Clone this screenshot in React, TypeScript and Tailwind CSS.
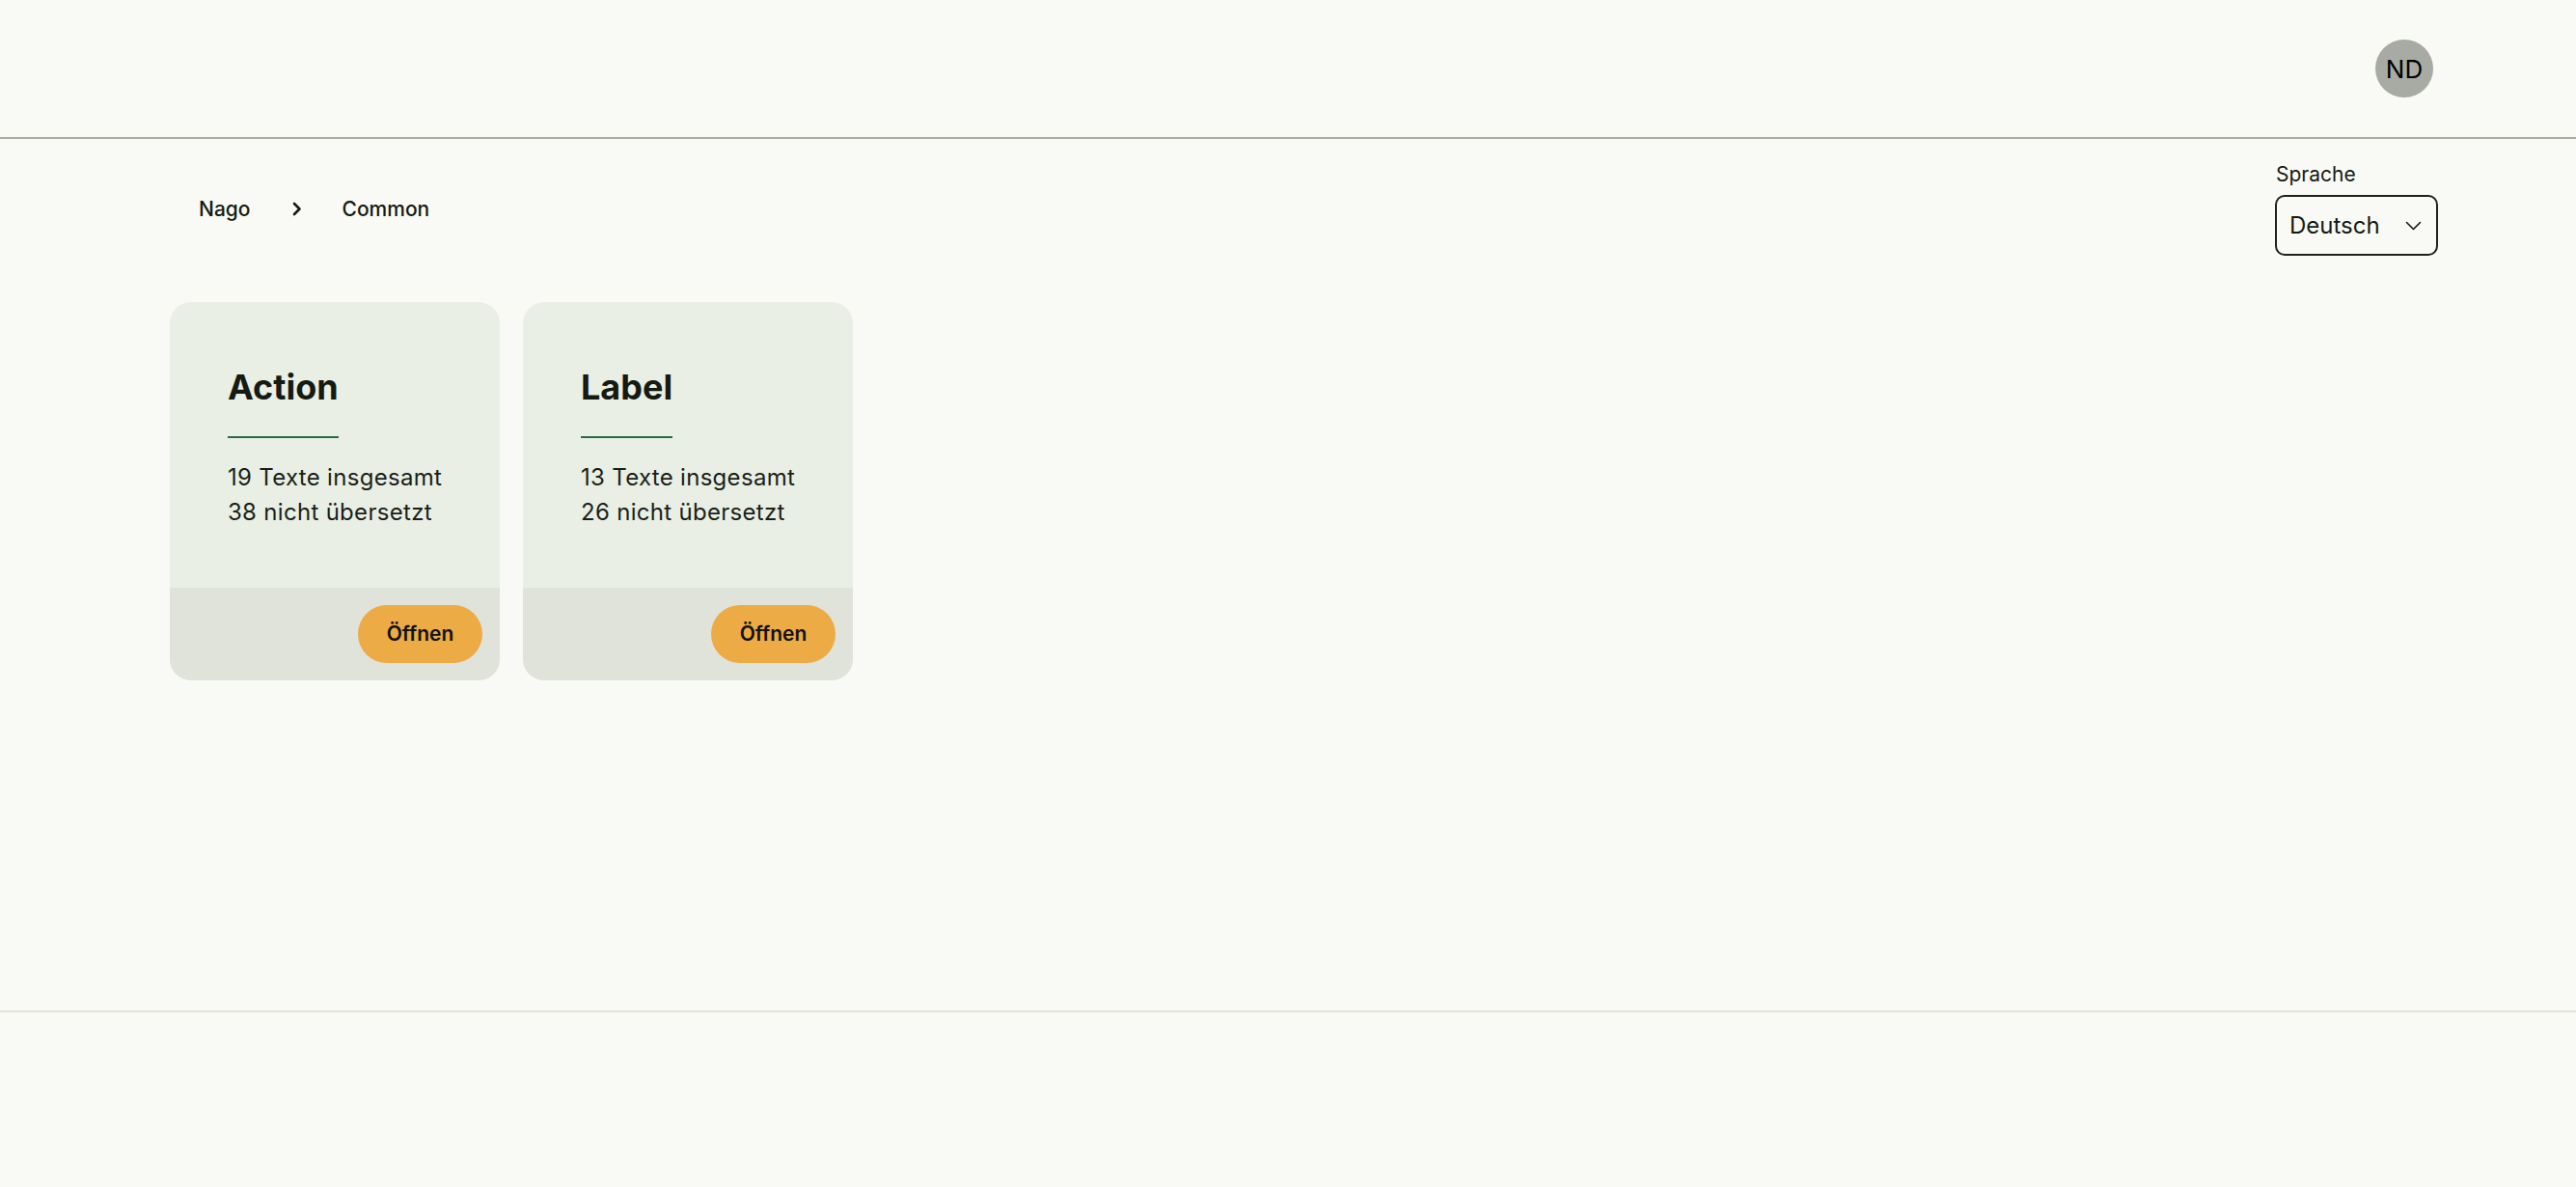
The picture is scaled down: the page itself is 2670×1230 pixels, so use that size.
import React from 'react';

type Category = {
  title: string;
  total: number;
  untranslated: number;
};

const categories: Category[] = [
  { title: 'Action', total: 19, untranslated: 38 },
  { title: 'Label', total: 13, untranslated: 26 },
];

const ChevronRight: React.FC = () => (
  <svg width="10" height="15" viewBox="0 0 10 15" fill="none" className="block">
    <path d="M2 2l5.5 5.5L2 13" stroke="#151a13" strokeWidth="2.6" strokeLinecap="round" strokeLinejoin="round" />
  </svg>
);

const ChevronDown: React.FC = () => (
  <svg width="17" height="10" viewBox="0 0 17 10" fill="none" className="block">
    <path d="M1.5 1.5l7 7 7-7" stroke="#151a13" strokeWidth="1.6" strokeLinecap="round" strokeLinejoin="round" />
  </svg>
);

const CategoryCard: React.FC<{ item: Category }> = ({ item }) => (
  <div className="w-[342px] h-[392px] rounded-[22px] overflow-hidden flex flex-col bg-[#e9efe5]">
    <div className="flex-1 pl-[60px] pt-[66px]">
      <h2 className="inline-block text-[36px] leading-[44px] font-bold text-[#151a13] pb-[29px] border-b-2 border-[#2c6a41]">
        {item.title}
      </h2>
      <div className="mt-[23px] text-[24px] leading-[36px] tracking-[0.3px] text-[#1a1f18]">
        <p>{item.total} Texte insgesamt</p>
        <p>{item.untranslated} nicht übersetzt</p>
      </div>
    </div>
    <div className="h-[96px] bg-[#e0e3da] flex items-center justify-end pr-[18px]">
      <button className="h-[60px] w-[129px] rounded-full bg-[#ecab45] text-[21px] font-semibold text-[#111]">
        Öffnen
      </button>
    </div>
  </div>
);

export default function App() {
  return (
    <div className="h-[1230px] flex flex-col bg-[#f9faf5] text-[#151a13] font-['Inter',sans-serif]">
      <header className="h-[144px] shrink-0 border-b-2 border-[#a9aea5] flex items-center justify-end pr-[148px]">
        <div className="w-[60px] h-[60px] rounded-full bg-[#a7aba3] flex items-center justify-center text-[26px] text-black">
          ND
        </div>
      </header>

      <main className="h-[903px] shrink-0 pl-[176px] pr-[143px]">
        <div className="flex items-start justify-between">
          <nav className="mt-[57px] flex items-center text-[21px] font-medium">
            <span className="pl-[30px]">Nago</span>
            <span className="ml-[43px]">
              <ChevronRight />
            </span>
            <span className="ml-[42px]">Common</span>
          </nav>
          <div className="mt-[21px] w-[169px]">
            <label className="block text-[21px] leading-[32px] mb-[5px] pl-[1px]">Sprache</label>
            <div className="h-[63px] rounded-[10px] border-2 border-[#1e231c] flex items-center justify-between pl-[13px] pr-[15px]">
              <span className="text-[24px]">Deutsch</span>
              <ChevronDown />
            </div>
          </div>
        </div>

        <div className="mt-[48px] flex gap-[24px]">
          {categories.map((c) => (
            <CategoryCard key={c.title} item={c} />
          ))}
        </div>
      </main>

      <footer className="flex-1 border-t-2 border-[#e1e4da]" />
    </div>
  );
}
